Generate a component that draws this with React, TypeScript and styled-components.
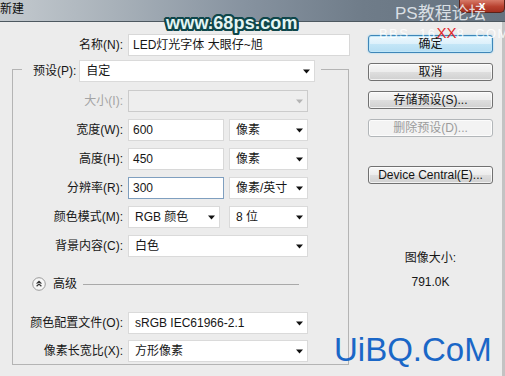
import React from "react";
import styled, { createGlobalStyle } from "styled-components";

const Global = createGlobalStyle`
  html, body { margin: 0; padding: 0; background: #ececec; }
  body {
    font-family: "Liberation Sans", "Noto Sans CJK SC", sans-serif;
    font-size: 12px;
    color: #161616;
  }
  * { box-sizing: border-box; }
`;

const Window = styled.div`
  position: relative;
  width: 505px;
  height: 376px;
  overflow: hidden;
  background: #ececec;
  display: flex;
  flex-direction: column;
`;

const TitleBar = styled.div`
  height: 22px;
  flex: none;
  display: flex;
  justify-content: space-between;
  align-items: flex-start;
  background: linear-gradient(
    to right,
    #c4cacf 0%,
    #a9b2ba 22%,
    #8793a0 48%,
    #6f7c89 72%,
    #65727f 100%
  );
  border-bottom: 1px solid #4d5860;
`;

const TitleText = styled.div`
  padding-top: 2px;
  line-height: 14px;
  font-size: 12px;
  color: #0c0c0c;
`;

const CloseBtn = styled.div`
  width: 46px;
  height: 13px;
  border: 1px solid #5a2219;
  border-top: none;
  border-radius: 0 0 5px 5px;
  background: linear-gradient(#d77a68, #b8412f 55%, #a32f1f);
  display: flex;
  justify-content: center;
  align-items: flex-end;
  color: #fff;
  font-size: 12px;
  font-weight: bold;
  line-height: 12px;
  overflow: hidden;
`;

const Body = styled.div`
  flex: 1;
  display: flex;
  border-right: 3px solid #c3c3c3;
`;

const LeftCol = styled.div`
  width: 349px;
  flex: none;
  padding-top: 12px;
  display: flex;
  flex-direction: column;
`;

const Row = styled.div<{ $gap?: number }>`
  display: flex;
  align-items: center;
  height: 22px;
  gap: ${(p) => p.$gap ?? 5}px;
`;

const Label = styled.div<{ $w?: number; $disabled?: boolean }>`
  width: ${(p) => (p.$w ? `${p.$w}px` : "auto")};
  flex: none;
  text-align: right;
  line-height: 16px;
  white-space: nowrap;
  color: ${(p) => (p.$disabled ? "#a4a4a4" : "#161616")};
`;

const Field = styled.div<{ $w: number; $focus?: boolean; $mr?: number }>`
  width: ${(p) => p.$w}px;
  height: 22px;
  flex: none;
  margin-right: ${(p) => p.$mr ?? 0}px;
  background: #fff;
  border: 1px solid ${(p) => (p.$focus ? "#7f9fbf" : "#d8d8d8")};
  display: flex;
  align-items: center;
  padding: 0 4px;
  line-height: 16px;
  white-space: nowrap;
`;

const SelectBox = styled.div<{ $w: number; $disabled?: boolean; $mr?: number }>`
  width: ${(p) => p.$w}px;
  height: 22px;
  flex: none;
  margin-right: ${(p) => p.$mr ?? 0}px;
  background: ${(p) => (p.$disabled ? "#eeeeee" : "#fff")};
  border: 1px solid ${(p) => (p.$disabled ? "#cbcbcb" : "#dadada")};
  display: flex;
  align-items: center;
  justify-content: space-between;
  padding: 0 4px 0 6px;
  line-height: 16px;
  white-space: nowrap;
`;

const Arrow = ({ disabled }: { disabled?: boolean }) => (
  <svg width="7" height="5" viewBox="0 0 7 5">
    <path d="M0 0.5 H7 L3.5 4.5 Z" fill={disabled ? "#b4b4b4" : "#111"} />
  </svg>
);

const Select = ({
  w,
  value,
  disabled,
  mr,
}: {
  w: number;
  value?: string;
  disabled?: boolean;
  mr?: number;
}) => (
  <SelectBox $w={w} $disabled={disabled} $mr={mr}>
    <span>{value ?? ""}</span>
    <Arrow disabled={disabled} />
  </SelectBox>
);

const Group = styled.fieldset`
  margin: 0 0 0 12px;
  width: 337px;
  border: 1px solid #b4b4b4;
  padding: 0 0 2px 0;
  min-width: 0;
`;

const Legend = styled.legend`
  margin-left: 9px;
  padding: 4px 6px 0 11px;
  display: flex;
  align-items: center;
  gap: 3px;
`;

const Rows = styled.div`
  display: flex;
  flex-direction: column;
  gap: 7px;
  margin-top: 8px;
`;

const LowerRows = styled.div`
  display: flex;
  flex-direction: column;
  gap: 6px;
  margin-top: 21px;
`;

const AdvRow = styled.div`
  display: flex;
  align-items: center;
  height: 14px;
  margin-top: 20px;
  padding-left: 19px;
`;

const AdvText = styled.span`
  margin-left: 7px;
  line-height: 14px;
`;

const AdvLine = styled.div`
  margin-left: 6px;
  width: 216px;
  height: 1px;
  background: #a9a9a9;
`;

const CollapseIcon = () => (
  <svg width="14" height="14" viewBox="0 0 14 14">
    <circle cx="7" cy="7" r="6.3" fill="#f7f7f7" stroke="#9a9a9a" strokeWidth="1" />
    <path
      d="M4.6 6.6 L7 4.4 L9.4 6.6 M4.6 9.2 L7 7 L9.4 9.2"
      fill="none"
      stroke="#333"
      strokeWidth="1.2"
    />
  </svg>
);

const RightCol = styled.div`
  width: 125px;
  flex: none;
  margin-left: 19px;
  padding-top: 13px;
  display: flex;
  flex-direction: column;
  align-items: stretch;
`;

const Button = styled.div<{ $variant?: "default" | "disabled"; $mt?: number }>`
  height: 18px;
  margin-top: ${(p) => p.$mt ?? 0}px;
  border-radius: 3px;
  display: flex;
  align-items: center;
  justify-content: center;
  line-height: 16px;
  white-space: nowrap;
  border: 1px solid
    ${(p) =>
      p.$variant === "default"
        ? "#3f86b8"
        : p.$variant === "disabled"
        ? "#b2b6b9"
        : "#717171"};
  color: ${(p) => (p.$variant === "disabled" ? "#9c9c9c" : "#141414")};
  background: ${(p) =>
    p.$variant === "default"
      ? "linear-gradient(#eef8fd 0%, #dcf0fb 50%, #c4e6f7 51%, #b5ddf3 100%)"
      : p.$variant === "disabled"
      ? "#f3f3f3"
      : "linear-gradient(#f7f7f7 0%, #ececec 50%, #dedede 51%, #d0d0d0 100%)"};
  box-shadow: ${(p) =>
    p.$variant === "default"
      ? "inset 0 0 0 1px #bfe6f8, 0 0 2px #8fd0ef"
      : "inset 0 0 0 1px rgba(255,255,255,0.7)"};
`;

const SizeTitle = styled.div`
  margin-top: 66px;
  text-align: center;
  line-height: 16px;
`;

const SizeValue = styled.div`
  margin-top: 8px;
  text-align: center;
  line-height: 16px;
`;

const WmSite = styled.div`
  position: absolute;
  left: 166px;
  top: 12px;
  font-family: "Liberation Sans", sans-serif;
  font-weight: bold;
  font-size: 18px;
  line-height: 22px;
  color: #e4f5f3;
  letter-spacing: 0.2px;
  text-shadow: 2px 0 0 #0f474b, -2px 0 0 #0f474b, 0 2px 0 #0f474b,
    0 -2px 0 #0f474b, 1.5px 1.5px 0 #0f474b, -1.5px 1.5px 0 #0f474b,
    1.5px -1.5px 0 #0f474b, -1.5px -1.5px 0 #0f474b, 2px 1px 0 #0f474b,
    -2px 1px 0 #0f474b, 2px -1px 0 #0f474b, -2px -1px 0 #0f474b,
    1px 2px 0 #0f474b, -1px 2px 0 #0f474b, 1px -2px 0 #0f474b,
    -1px -2px 0 #0f474b;
  pointer-events: none;
`;

const WmForum = styled.div`
  position: absolute;
  left: 395px;
  top: 3px;
  font-family: "Liberation Sans", "Noto Sans CJK SC", sans-serif;
  font-size: 17px;
  line-height: 22px;
  color: rgba(238, 243, 247, 0.85);
  pointer-events: none;
`;

const WmBbs = styled.div`
  position: absolute;
  left: 379px;
  top: 25px;
  font-family: "Liberation Sans", sans-serif;
  font-size: 13px;
  line-height: 16px;
  letter-spacing: 1.4px;
  color: rgba(255, 255, 255, 0.85);
  white-space: pre;
  pointer-events: none;
`;

const WmRed = styled.span`
  color: #e0262a;
  font-size: 15px;
  letter-spacing: 0;
`;

const WmBottom = styled.div`
  position: absolute;
  left: 334px;
  top: 330px;
  font-family: "Liberation Sans", sans-serif;
  font-size: 33px;
  line-height: 40px;
  color: #1a67c7;
  pointer-events: none;
`;

export default function App() {
  return (
    <>
      <Global />
      <Window>
        <TitleBar>
          <TitleText>新建</TitleText>
          <CloseBtn>x</CloseBtn>
        </TitleBar>
        <Body>
          <LeftCol>
            <Row>
              <Label $w={123}>名称(N):</Label>
              <Field $w={222}>LED灯光字体 大眼仔~旭</Field>
            </Row>
            <Group>
              <Legend>
                <Label>预设(P):</Label>
                <Select w={236} value="自定" />
              </Legend>
              <Rows>
                <Row>
                  <Label $w={110} $disabled>
                    大小(I):
                  </Label>
                  <Select w={180} disabled />
                </Row>
                <Row>
                  <Label $w={110}>宽度(W):</Label>
                  <Field $w={96}>600</Field>
                  <Select w={79} value="像素" />
                </Row>
                <Row>
                  <Label $w={110}>高度(H):</Label>
                  <Field $w={96}>450</Field>
                  <Select w={79} value="像素" />
                </Row>
                <Row>
                  <Label $w={110}>分辨率(R):</Label>
                  <Field $w={96} $focus>
                    300
                  </Field>
                  <Select w={79} value="像素/英寸" />
                </Row>
                <Row>
                  <Label $w={110}>颜色模式(M):</Label>
                  <Select w={92} value="RGB 颜色" mr={4} />
                  <Select w={79} value="8 位" />
                </Row>
                <Row>
                  <Label $w={110}>背景内容(C):</Label>
                  <Select w={180} value="白色" />
                </Row>
              </Rows>
              <AdvRow>
                <CollapseIcon />
                <AdvText>高级</AdvText>
                <AdvLine />
              </AdvRow>
              <LowerRows>
                <Row>
                  <Label $w={110}>颜色配置文件(O):</Label>
                  <Select w={180} value="sRGB IEC61966-2.1" />
                </Row>
                <Row>
                  <Label $w={110}>像素长宽比(X):</Label>
                  <Select w={180} value="方形像素" />
                </Row>
              </LowerRows>
            </Group>
          </LeftCol>
          <RightCol>
            <Button $variant="default">确定</Button>
            <Button $mt={10}>取消</Button>
            <Button $mt={10}>存储预设(S)...</Button>
            <Button $mt={10} $variant="disabled">
              删除预设(D)...
            </Button>
            <Button $mt={29}>Device Central(E)...</Button>
            <SizeTitle>图像大小:</SizeTitle>
            <SizeValue>791.0K</SizeValue>
          </RightCol>
        </Body>
        <WmSite>www.68ps.com</WmSite>
        <WmForum>PS教程论坛</WmForum>
        <WmBbs>
          {"BBS  16"}
          <WmRed>XX</WmRed>
          {"8  COM"}
        </WmBbs>
        <WmBottom>UiBQ.CoM</WmBottom>
      </Window>
    </>
  );
}
